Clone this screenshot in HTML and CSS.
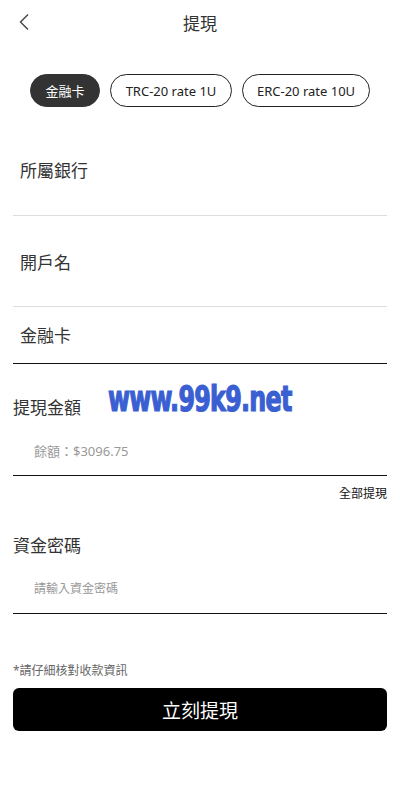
FILE: index.html
```html
<!DOCTYPE html>
<html lang="zh-Hant">
<head>
<meta charset="utf-8">
<link rel="stylesheet" href="styles.css">
</head>
<body>
<div class="page">
  <header class="topbar">
    <span class="back"><svg width="12" height="18" viewBox="0 0 12 18"><path d="M10 1.5 L2.5 9 L10 16.5" fill="none" stroke="#444" stroke-width="1.4"/></svg></span>
    <h1 class="title">提現</h1>
  </header>

  <div class="tabs">
    <span class="tab active">金融卡</span>
    <span class="tab">TRC-20 rate 1U</span>
    <span class="tab">ERC-20 rate 10U</span>
  </div>

  <div class="field f1"><span class="flabel">所屬銀行</span></div>
  <div class="field f2"><span class="flabel">開戶名</span></div>
  <div class="field f3"><span class="flabel">金融卡</span></div>

  <div class="group amount">
    <div class="ghead">
      <span class="glabel">提現金額</span>
      <span class="watermark">www.99k9.net</span>
    </div>
    <div class="ginput">餘額：$3096.75</div>
  </div>
  <div class="allrow">全部提現</div>

  <div class="group pw">
    <div class="ghead"><span class="glabel">資金密碼</span></div>
    <div class="ginput ph">請輸入資金密碼</div>
  </div>

  <p class="note">*請仔細核對收款資訊</p>
  <button class="submit">立刻提現</button>
</div>
</body>
</html>
```
FILE: styles.css
```css
* { box-sizing: border-box; }
html, body { margin: 0; padding: 0; background: #fff; }
body {
  font-family: "Noto Sans", "Noto Sans CJK TC", sans-serif;
  color: #333;
}
.page { width: 400px; padding: 0 13px; }
.topbar {
  height: 46px;
  display: flex;
  align-items: center;
  justify-content: center;
  position: relative;
}
.back { position: absolute; left: 5px; top: 13px; width: 12px; height: 18px; display: flex; }
.title { margin: 0; font-size: 17px; font-weight: 400; color: #333; line-height: 1; }
.tabs {
  display: flex;
  gap: 10px;
  padding: 28px 0 0 17px;
}
.tab {
  height: 33px;
  border: 1px solid #222;
  border-radius: 17px;
  display: flex;
  align-items: center;
  justify-content: center;
  font-size: 13px;
  color: #222;
}
.tab:nth-child(1) { width: 70px; }
.tab:nth-child(2) { width: 122px; }
.tab:nth-child(3) { width: 128px; }
.tab.active { background: #333; color: #fff; border-color: #333; }
.field { padding-left: 7px; }
.flabel { display: block; font-size: 17px; line-height: 24px; color: #333; }
.f1 { padding-top: 52px; height: 109px; border-bottom: 1px solid #ddd; }
.f2 { padding-top: 35px; height: 91px; border-bottom: 1px solid #ddd; }
.f3 { padding-top: 17px; height: 57px; border-bottom: 1px solid #111; }
.group { border-bottom: 1px solid #111; }
.ghead { position: relative; }
.glabel { display: block; font-size: 17px; line-height: 24px; color: #333; }
.amount { padding-top: 32px; height: 112px; }
.watermark {
  position: absolute;
  left: 95px;
  top: -15px;
  font-family: "DejaVu Sans Condensed", "DejaVu Sans", sans-serif;
  font-weight: 700;
  font-size: 36px;
  line-height: 1;
  color: #3a5fd2;
  -webkit-text-stroke: 1.2px #3a5fd2;
  letter-spacing: -1px;
  transform: scaleX(0.735);
  transform-origin: left top;
  white-space: nowrap;
}
.ginput {
  padding-left: 21px;
  font-size: 13px;
  line-height: 18px;
  color: #999;
  margin-top: 22px;
}
.pw { padding-top: 33px; height: 113px; }
.ginput.ph { font-size: 12px; line-height: 16px; margin-top: 23px; }
.allrow {
  text-align: right;
  font-size: 12px;
  color: #111;
  margin-top: 11px;
  line-height: 14px;
}
.note {
  margin: 50px 0 0;
  font-size: 12px;
  color: #666;
  line-height: 14px;
}
.submit {
  display: block;
  width: 100%;
  height: 43px;
  margin-top: 10px;
  border: none;
  border-radius: 6px;
  background: #000;
  color: #fff;
  font-size: 19px;
  font-family: "Noto Sans CJK TC", sans-serif;
}
```
